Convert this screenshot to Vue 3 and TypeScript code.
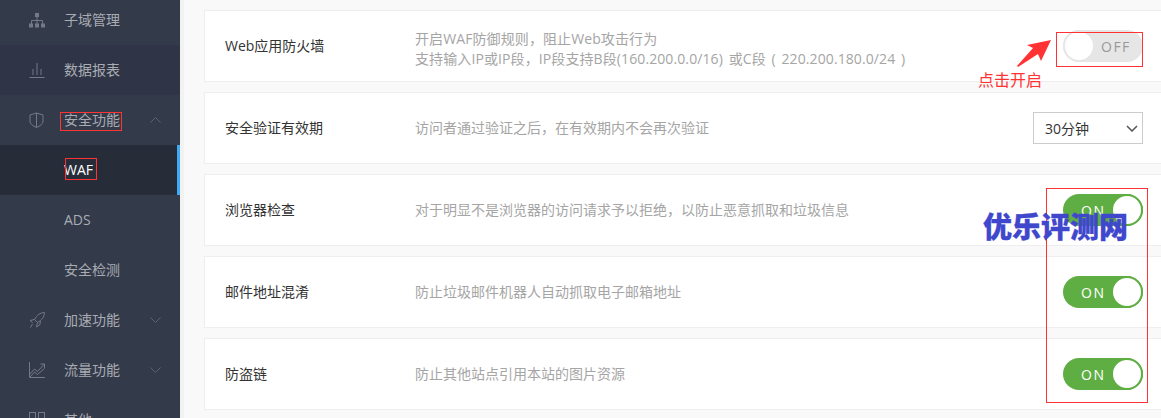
<script setup lang="ts">
interface NavItem {
  label: string
  icon?: string
  arrow?: 'up' | 'down'
  active?: boolean
  dark?: boolean
}

interface Setting {
  title: string
  desc: string[]
  control: 'off' | 'on' | 'select'
}

const navItems: NavItem[] = [
  { label: '子域管理', icon: 'tree' },
  { label: '数据报表', icon: 'bars', dark: true },
  { label: '安全功能', icon: 'shield', arrow: 'up' },
  { label: 'WAF', active: true },
  { label: 'ADS' },
  { label: '安全检测' },
  { label: '加速功能', icon: 'rocket', arrow: 'down' },
  { label: '流量功能', icon: 'chart', arrow: 'down' },
  { label: '其他', icon: 'grid' }
]

const settings: Setting[] = [
  {
    title: 'Web应用防火墙',
    desc: ['开启WAF防御规则，阻止Web攻击行为', '支持输入IP或IP段，IP段支持B段(160.200.0.0/16) 或C段 ( 220.200.180.0/24 )'],
    control: 'off'
  },
  { title: '安全验证有效期', desc: ['访问者通过验证之后，在有效期内不会再次验证'], control: 'select' },
  { title: '浏览器检查', desc: ['对于明显不是浏览器的访问请求予以拒绝，以防止恶意抓取和垃圾信息'], control: 'on' },
  { title: '邮件地址混淆', desc: ['防止垃圾邮件机器人自动抓取电子邮箱地址'], control: 'on' },
  { title: '防盗链', desc: ['防止其他站点引用本站的图片资源'], control: 'on' },
  { title: '', desc: [], control: 'on' }
]
</script>

<template>
  <div class="page">
    <aside class="sidebar">
      <div
        v-for="item in navItems"
        :key="item.label"
        class="nav-item"
        :class="{ active: item.active, dark: item.dark }"
      >
        <span class="nav-icon">
          <svg v-if="item.icon === 'tree'" width="16" height="15" viewBox="0 0 16 15">
            <path d="M8 4v7M2.500 11V7.500h11V11" />
            <rect class="solid" x="6.500" y="0.500" width="3" height="3" />
            <rect class="solid" x="0.500" y="11" width="3" height="3" />
            <rect class="solid" x="6.500" y="11" width="3" height="3" />
            <rect class="solid" x="12.500" y="11" width="3" height="3" />
          </svg>
          <svg v-else-if="item.icon === 'bars'" width="16" height="15" viewBox="0 0 16 15">
            <path d="M0.500 14.500h15M4 12V6M8 12V0M12 12V6" />
          </svg>
          <svg v-else-if="item.icon === 'shield'" width="15" height="16" viewBox="0 0 15 16">
            <path d="M7.500 1 1 3v6c0 3 3 5 6.500 6.500C11 14 14 12 14 9V3zM7.500 1v14.500" />
          </svg>
          <svg v-else-if="item.icon === 'rocket'" width="16" height="16" viewBox="0 0 16 16">
            <path d="M15.500 0.500c-4.500.3-7.500 2.500-10 7l3 3C13 8 15.200 5 15.500 0.500zM5.500 7.500 1 8.500l2.500 2M8.500 10.500 7.500 15l3.500-2.500.3-4M3.500 12l-2 3.500" />
          </svg>
          <svg v-else-if="item.icon === 'chart'" width="16" height="16" viewBox="0 0 16 16">
            <path d="M0.500 0v15.500H16M1 12l4.500-5 3 2.500L15 2.500M11.500 2H15.500V6M1 15l4.500-5 3 2.500 7-6" />
          </svg>
          <svg v-else-if="item.icon === 'grid'" width="16" height="16" viewBox="0 0 16 16">
            <rect x="0.500" y="0.500" width="6" height="6" />
            <rect x="9.500" y="0.500" width="6" height="6" />
            <rect x="0.500" y="9.500" width="6" height="6" />
            <rect x="9.500" y="9.500" width="6" height="6" />
          </svg>
        </span>
        <span class="nav-label">{{ item.label }}</span>
        <svg v-if="item.arrow" class="nav-arrow" width="11" height="6" viewBox="0 0 11 6">
          <path v-if="item.arrow === 'up'" d="M0.500 5.500l5-5 5 5" />
          <path v-else d="M0.500 0.500l5 5 5-5" />
        </svg>
      </div>
    </aside>
    <div class="strip"></div>

    <main class="content">
      <section v-for="(row, i) in settings" :key="i" class="card">
        <div class="card-title">{{ row.title }}</div>
        <div class="card-desc" :class="{ multi: row.desc.length > 1 }">
          <p v-for="line in row.desc" :key="line">{{ line }}</p>
        </div>
        <div v-if="row.control === 'select'" class="select">
          <span>30分钟</span>
          <svg width="12" height="7" viewBox="0 0 12 7">
            <path d="M1 1l5 5 5-5" />
          </svg>
        </div>
        <div v-else-if="row.control === 'off'" class="toggle off">
          <span class="knob"></span>
          <span class="toggle-text">OFF</span>
        </div>
        <div v-else-if="row.title" class="toggle on">
          <span class="toggle-text">ON</span>
          <span class="knob"></span>
        </div>
      </section>
    </main>

    <!-- annotations drawn over the screenshot -->
    <div class="mark mark-nav"></div>
    <div class="mark mark-waf"></div>
    <div class="mark mark-off"></div>
    <div class="mark mark-on"></div>
    <svg class="pointer" width="36" height="30" viewBox="0 0 36 30">
      <polygon points="35,2 25,23 22,16 2,29 1,28 17,10 11,7" />
    </svg>
    <div class="hint">点击开启</div>
    <div class="watermark">优乐评测网</div>
  </div>
</template>

<style scoped>
.page {
  position: relative;
  display: flex;
  width: 1161px;
  height: 418px;
  overflow: hidden;
  background: #f9f9f9;
  font-family: "Open Sans", "Noto Sans CJK SC", sans-serif;
  font-size: 14px;
}

.sidebar {
  flex: none;
  width: 180px;
  height: 423px;
  margin-top: -5px;
  background: #333a4a;
}

.strip {
  flex: none;
  width: 4px;
  background: #f2f2f2;
}

.nav-item {
  display: flex;
  align-items: center;
  box-sizing: border-box;
  height: 50px;
  padding-left: 29px;
  color: #a9acb3;
}

.nav-item.dark {
  background: #2f3546;
}

.nav-item.active {
  background: #272d38;
  border-right: 3px solid #3fa9f5;
  color: #fff;
}

.nav-icon {
  flex: none;
  display: flex;
  width: 35px;
}

.nav-icon svg,
.nav-arrow {
  fill: none;
  stroke: #737987;
  stroke-width: 1;
}

.nav-icon .solid {
  fill: #737987;
}

.nav-label {
  margin-top: -2px;
}

.nav-arrow {
  margin-left: 30px;
  stroke: #5c6271;
}

.content {
  flex: 1;
  display: flex;
  flex-direction: column;
  gap: 10px;
  min-width: 0;
  padding: 10px 0 0 20px;
}

.card {
  flex: none;
  display: flex;
  align-items: center;
  box-sizing: border-box;
  height: 72px;
  margin-right: -2px;
  padding: 0 19px 0 20px;
  background: #fff;
  border: 1px solid #eee;
}

.card-title {
  flex: none;
  width: 190px;
  margin-top: -3px;
  color: #333;
}

.card-desc {
  flex: 1;
  color: #a5a5a5;
  line-height: 20px;
}

.card-desc.multi {
  padding-top: 6px;
  letter-spacing: 0.100px;
  word-spacing: 2px;
}

.card-desc p {
  margin: 0;
}

.select {
  display: flex;
  align-items: center;
  justify-content: space-between;
  box-sizing: border-box;
  width: 110px;
  height: 32px;
  padding: 0 4px 0 11px;
  border: 1px solid #ccc;
  color: #333;
}

.select svg {
  fill: none;
  stroke: #555;
  stroke-width: 1.500;
}

.toggle {
  display: flex;
  align-items: center;
  box-sizing: border-box;
  width: 80px;
  height: 32px;
  border-radius: 16px;
  letter-spacing: 1.500px;
}

.toggle.off {
  background: #e6e6e6;
  color: #999;
}

.toggle.on {
  justify-content: space-between;
  padding-left: 18px;
  background: #5fae44;
  color: #fff;
}

.knob {
  box-sizing: border-box;
  width: 32px;
  height: 32px;
  border-radius: 50%;
  background: #fff;
}

.toggle.off .knob {
  border: 2px solid #e6e6e6;
}

.toggle.off .toggle-text {
  margin-left: 6px;
}

.toggle.on .knob {
  border: 2px solid #5fae44;
}

.mark {
  position: absolute;
  box-sizing: border-box;
  border: 1px solid #f33;
}

.mark-nav {
  left: 60px;
  top: 112px;
  width: 62px;
  height: 19px;
}

.mark-waf {
  left: 65px;
  top: 158px;
  width: 32px;
  height: 22px;
}

.mark-off {
  left: 1056px;
  top: 32px;
  width: 87px;
  height: 35px;
}

.mark-on {
  left: 1046px;
  top: 188px;
  width: 102px;
  height: 215px;
}

.pointer {
  position: absolute;
  left: 1016px;
  top: 38px;
  fill: #f33;
}

.hint {
  position: absolute;
  left: 978px;
  top: 69px;
  color: #f33;
  font-size: 16px;
  line-height: 22px;
}

.watermark {
  position: absolute;
  left: 983px;
  top: 207px;
  color: #3f48cc;
  font-size: 29px;
  font-weight: 900;
  line-height: 40px;
  -webkit-text-stroke: 0.300px #3f48cc;
}
</style>
